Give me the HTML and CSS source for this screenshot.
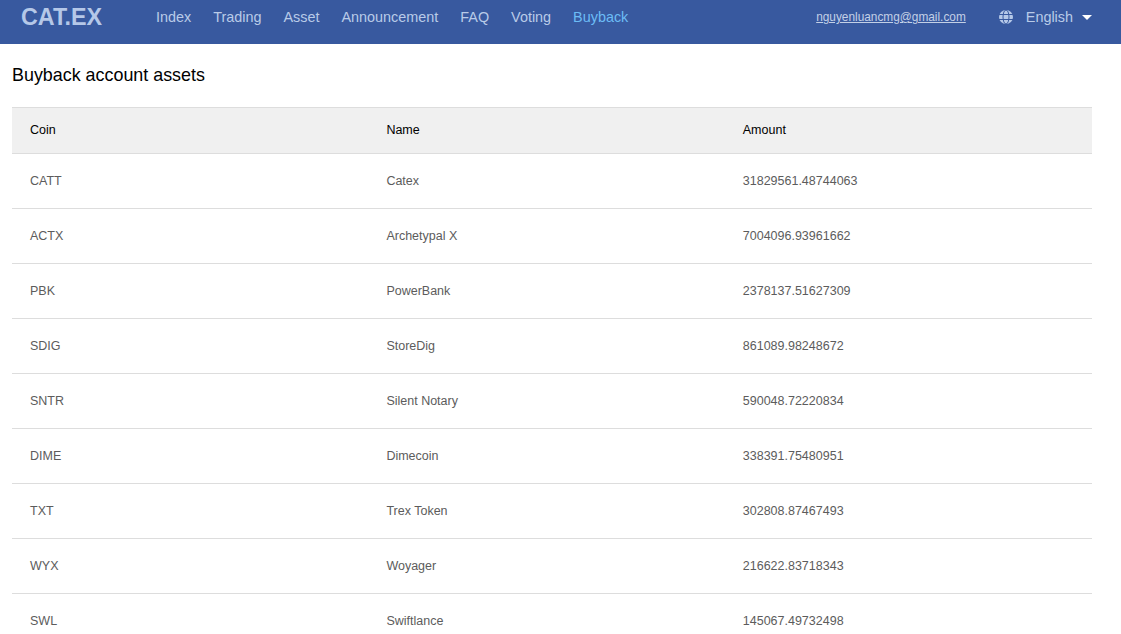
FILE: index.html
```html
<!DOCTYPE html>
<html lang="en">
<head>
<meta charset="utf-8">
<title>Buyback account assets</title>
<link rel="stylesheet" href="styles.css">
</head>
<body>
<header class="topbar">
  <a class="logo">CAT.EX</a>
  <nav class="nav">
    <a>Index</a><a>Trading</a><a>Asset</a><a>Announcement</a><a>FAQ</a><a>Voting</a><a class="active">Buyback</a>
  </nav>
  <a class="email">nguyenluancmg@gmail.com</a>
  <div class="lang">
    <svg class="globe" width="14" height="14" viewBox="0 0 14 14"><circle cx="7" cy="7" r="7" fill="#b5c8e8"/><g fill="none" stroke="#38599f" stroke-width="1"><ellipse cx="7" cy="7" rx="3" ry="7"/><path d="M0 4.5h14M0 9.5h14"/></g></svg>
    <span>English</span>
    <i class="caret"></i>
  </div>
</header>
<main class="content">
  <h1 class="title">Buyback account assets</h1>
  <table class="assets">
    <thead><tr><th>Coin</th><th>Name</th><th>Amount</th></tr></thead>
    <tbody>
      <tr><td>CATT</td><td>Catex</td><td>31829561.48744063</td></tr>
      <tr><td>ACTX</td><td>Archetypal X</td><td>7004096.93961662</td></tr>
      <tr><td>PBK</td><td>PowerBank</td><td>2378137.51627309</td></tr>
      <tr><td>SDIG</td><td>StoreDig</td><td>861089.98248672</td></tr>
      <tr><td>SNTR</td><td>Silent Notary</td><td>590048.72220834</td></tr>
      <tr><td>DIME</td><td>Dimecoin</td><td>338391.75480951</td></tr>
      <tr><td>TXT</td><td>Trex Token</td><td>302808.87467493</td></tr>
      <tr><td>WYX</td><td>Woyager</td><td>216622.83718343</td></tr>
      <tr><td>SWL</td><td>Swiftlance</td><td>145067.49732498</td></tr>
    </tbody>
  </table>
</main>
</body>
</html>
```
FILE: styles.css
```css
html, body { margin: 0; padding: 0; height: 634px; overflow: hidden; background: #fff; }
body { font-family: "Liberation Sans", Arial, sans-serif; }
.topbar { display: flex; align-items: center; height: 44px; background: #38599f; color: #b9cbe8; padding-bottom: 10px; box-sizing: border-box; }
.logo { font-size: 23.3px; font-weight: 700; margin-left: 21px; width: 135px; color: #b5c8e8; }
.nav { display: flex; gap: 22px; font-size: 14.4px; }
.nav a { color: #b9cbe8; }
.nav a.active { color: #6cbcf5; }
.email { margin-left: auto; font-size: 11.85px; text-decoration: underline; color: #c3d0e6; }
.lang { display: flex; align-items: center; margin-left: 33px; margin-right: 29px; font-size: 14.4px; }
.lang span { margin-left: 13px; }
.caret { margin-left: 9px; width: 0; height: 0; border: 5px solid transparent; border-top: 5px solid #fff; border-bottom: 0; }
.content { padding: 0 29px 0 12px; }
.title { font-size: 17.9px; font-weight: 400; color: #000; margin: 21px 0 21px; line-height: 21px; }
.assets { width: 100%; border-collapse: collapse; table-layout: fixed; font-size: 12.5px; }
.assets th, .assets td { box-sizing: border-box; }
.assets th { height: 46px; padding: 0 18px 2px; background: #f0f0f0; font-weight: 400; color: #000; text-align: left; border-top: 1px solid #ddd; border-bottom: 1px solid #ddd; }
.assets th:nth-child(-n+2) { width: 33%; }
.assets td { height: 55px; padding: 0 18px; color: #5c5c5c; border-bottom: 1px solid #ddd; }
```
